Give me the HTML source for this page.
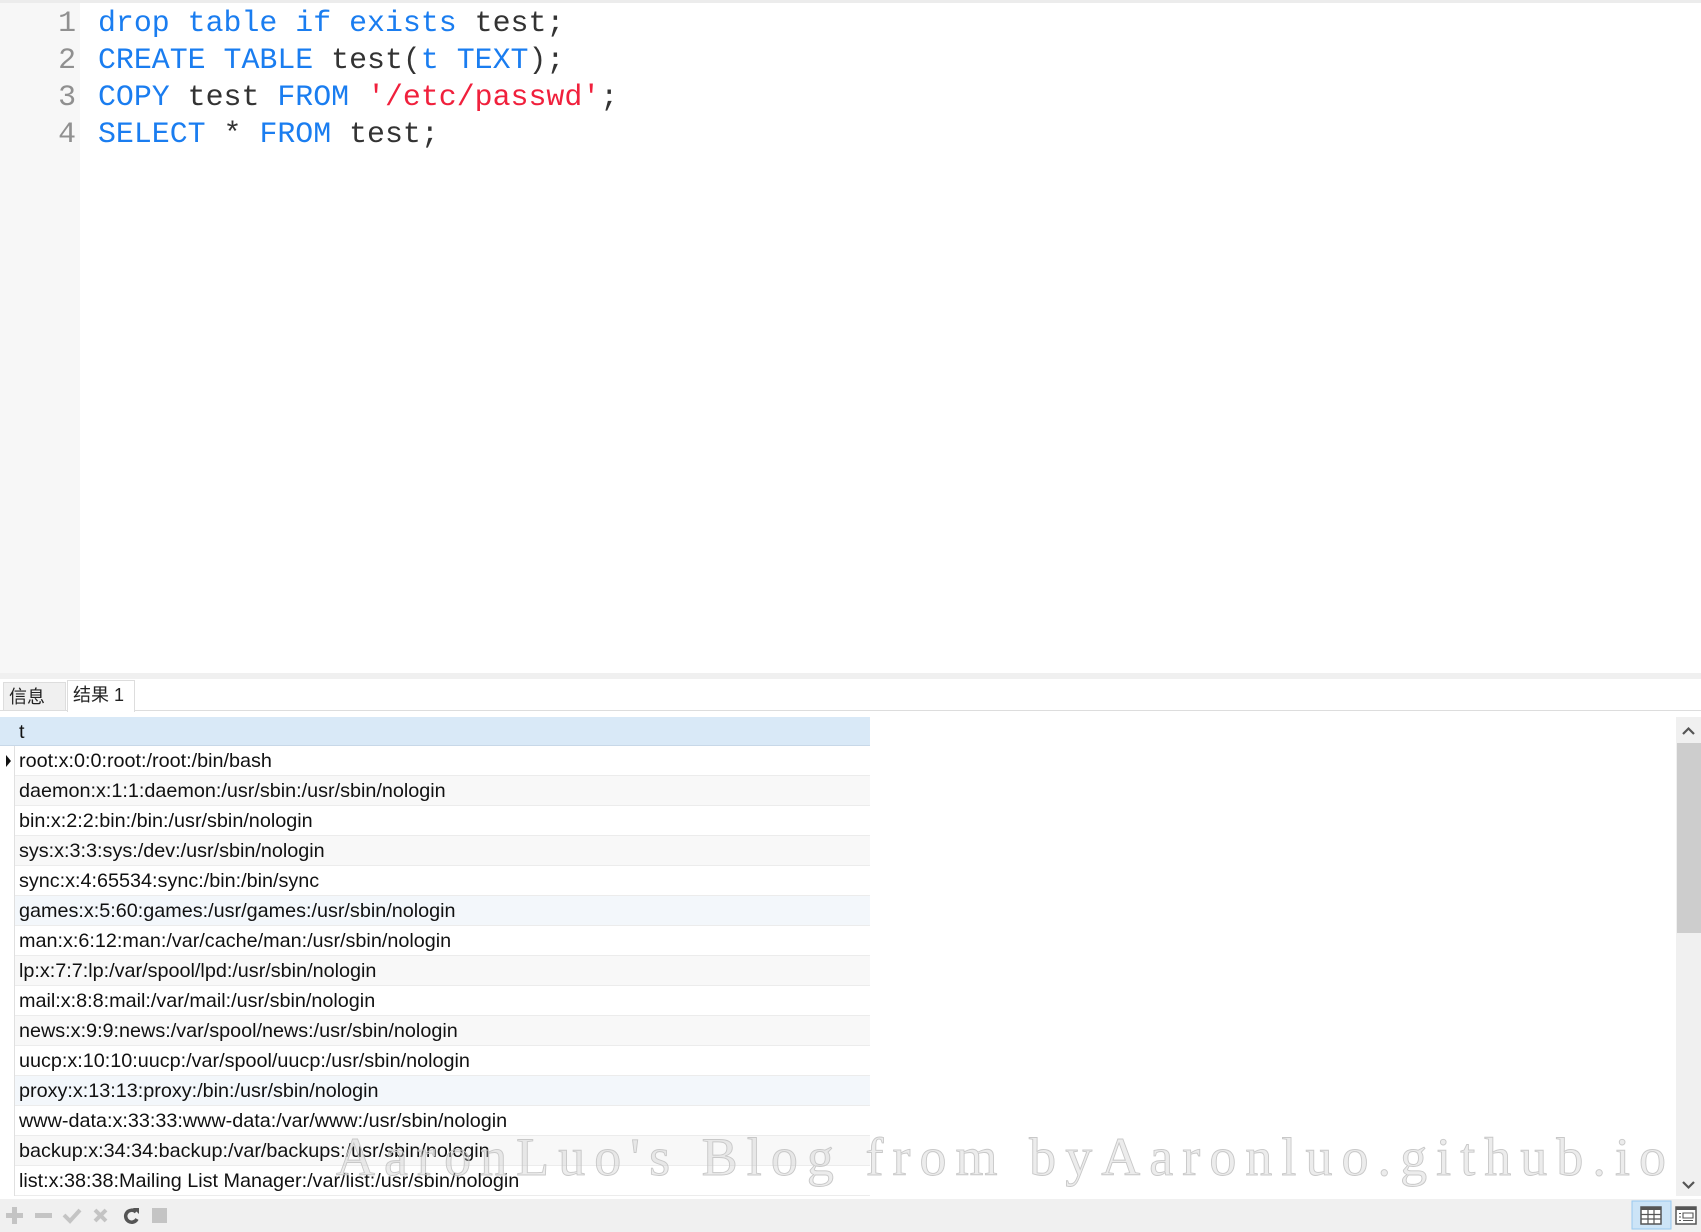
<!DOCTYPE html>
<html><head><meta charset="utf-8"><style>
*{margin:0;padding:0;box-sizing:border-box}
body{width:1701px;height:1232px;position:relative;background:#fff;overflow:hidden;font-family:"Liberation Sans","Noto Sans CJK SC",sans-serif}
.top{position:absolute;left:0;top:0;width:1701px;height:3px;background:#ececec}
.gut{position:absolute;left:0;top:3px;width:80px;height:670px;background:#f7f7f7}
.code{position:absolute;left:0;top:1px;font-family:"Liberation Mono",monospace;font-size:29.9px;line-height:37px}
.ln{position:absolute;left:0;width:76px;text-align:right;color:#909090}
.cl{position:absolute;left:98px;white-space:pre;color:#333}
.k{color:#1a7df0}.s{color:#f0203c}
.sep{position:absolute;left:0;top:673px;width:1701px;height:6px;background:#f0f0f0}
.tabs{position:absolute;left:0;top:679px;width:1701px;height:32px;border-bottom:1px solid #ddd}
.tab{position:absolute;top:1px;height:31px;font-size:18px;line-height:29px;padding-left:5px;color:#222}
.grid{position:absolute;left:0;top:717px}
.row{position:absolute;left:0;width:870px;height:30px;border-bottom:1px solid #ececec;font-size:19.8px;line-height:30px}
.row span{position:absolute;left:19px;color:#111;white-space:nowrap}
.row .rh{position:absolute;left:0;top:0;width:15px;height:30px;border-right:1px solid #e0e0e0;background:#fff}
.sb{position:absolute;left:1676px;top:717px;width:25px;height:479px;background:#f0f0f0}
.bot{position:absolute;left:0;top:1199px;width:1701px;height:33px;background:#f0f0f0}
</style></head><body>
<div class="top"></div>
<div class="gut"></div>
<div class="code">
<div class="ln" style="top:4px">1</div><div class="cl" style="top:4px"><span class="k">drop table if exists</span> test;</div>
<div class="ln" style="top:41px">2</div><div class="cl" style="top:41px"><span class="k">CREATE TABLE</span> test(<span class="k">t TEXT</span>);</div>
<div class="ln" style="top:78px">3</div><div class="cl" style="top:78px"><span class="k">COPY</span> test <span class="k">FROM</span> <span class="s">'/etc/passwd'</span>;</div>
<div class="ln" style="top:115px">4</div><div class="cl" style="top:115px"><span class="k">SELECT</span> * <span class="k">FROM</span> test;</div>
</div>
<div class="sep"></div>
<div class="tabs">
<div class="tab" style="left:3px;width:63px;background:#f0f0f0;border:1px solid #ddd;top:3px;height:29px">信息</div>
<div class="tab" style="left:67px;width:68px;background:#fff;border:1px solid #ddd;border-bottom:none;height:32px">结果 1</div>
</div>
<div class="grid">
<div class="row" style="top:0;height:29px;background:#d9e9f7;border-bottom:1px solid #c8d8e8"><span>t</span></div>
</div>
<div id="rows"></div>
<div class="sb">
<svg width="25" height="479" style="position:absolute;left:0;top:0"><path d="M7 17 L12.5 11.5 L18 17" stroke="#555" stroke-width="2.2" fill="none"/><rect x="1" y="26" width="24" height="190" fill="#cdcdcd"/><path d="M7 465 L12.5 470.5 L18 465" stroke="#555" stroke-width="2.2" fill="none"/></svg>
</div>
<div class="bot">
<svg width="180" height="33" style="position:absolute;left:0;top:0">
<g fill="#c4c4c4" stroke="none"><rect x="6" y="14" width="17" height="5"/><rect x="12" y="8" width="5" height="17"/><rect x="35" y="14" width="17" height="5"/></g>
<path d="M64 16 L70 22 L80 11" stroke="#c4c4c4" stroke-width="4" fill="none"/>
<path d="M95 11 L106 22 M106 11 L95 22" stroke="#c4c4c4" stroke-width="4" fill="none"/>
<path d="M136 13 A6 6 0 1 0 137 20" stroke="#555" stroke-width="3.5" fill="none"/><path d="M133 9 L139 9 L139 15 Z" fill="#555"/>
<rect x="152" y="9" width="15" height="15" fill="#c4c4c4"/>
</svg>
<svg width="70" height="33" style="position:absolute;left:1631px;top:0">
<rect x="1" y="2" width="39" height="28" fill="#cce4f7" stroke="#99c9ef"/>
<rect x="10" y="8" width="20" height="17" fill="#fff" stroke="#555" stroke-width="1.5"/><rect x="10" y="8" width="20" height="3" fill="#555"/>
<path d="M10 15.5 H30 M10 20 H30 M17 11 V25 M23 11 V25" stroke="#555" stroke-width="1.2"/>
<rect x="45" y="8" width="20" height="17" fill="#fff" stroke="#555" stroke-width="1.5"/><rect x="45" y="8" width="20" height="3" fill="#555"/>
<path d="M48 14.5 H50 M48 18 H50 M48 21.5 H50 M52 14 H62 V19 H52 Z M52 21.5 H62" stroke="#555" stroke-width="1.1" fill="none"/>
</svg>
</div>
<svg width="1701" height="1232" style="position:absolute;left:0;top:0;pointer-events:none">
<text x="336" y="1175" textLength="1330" lengthAdjust="spacing" font-family="Liberation Serif,serif" font-size="54" fill="rgba(200,200,200,0.35)" stroke="#c8c8c8" stroke-width="0.9">AaronLuo's Blog from byAaronluo.github.io</text>
</svg>
<script>
var d=["root:x:0:0:root:/root:/bin/bash","daemon:x:1:1:daemon:/usr/sbin:/usr/sbin/nologin","bin:x:2:2:bin:/bin:/usr/sbin/nologin","sys:x:3:3:sys:/dev:/usr/sbin/nologin","sync:x:4:65534:sync:/bin:/bin/sync","games:x:5:60:games:/usr/games:/usr/sbin/nologin","man:x:6:12:man:/var/cache/man:/usr/sbin/nologin","lp:x:7:7:lp:/var/spool/lpd:/usr/sbin/nologin","mail:x:8:8:mail:/var/mail:/usr/sbin/nologin","news:x:9:9:news:/var/spool/news:/usr/sbin/nologin","uucp:x:10:10:uucp:/var/spool/uucp:/usr/sbin/nologin","proxy:x:13:13:proxy:/bin:/usr/sbin/nologin","www-data:x:33:33:www-data:/var/www:/usr/sbin/nologin","backup:x:34:34:backup:/var/backups:/usr/sbin/nologin","list:x:38:38:Mailing List Manager:/var/list:/usr/sbin/nologin"];
var h="";for(var i=0;i<d.length;i++){var bg=(i%2==0)?"#fff":"#f8f8f8";if(i==5||i==11)bg="#f3f7fb";
h+='<div class="row" style="top:'+(746+i*30)+'px;background:'+bg+'"><div class="rh">'+(i==0?'<svg width="15" height="30"><path d="M6 9 L11 15 L6 21 Z" fill="#111"/></svg>':'')+'</div><span>'+d[i]+'</span></div>';}
document.getElementById("rows").innerHTML=h;
</script>
</body></html>
